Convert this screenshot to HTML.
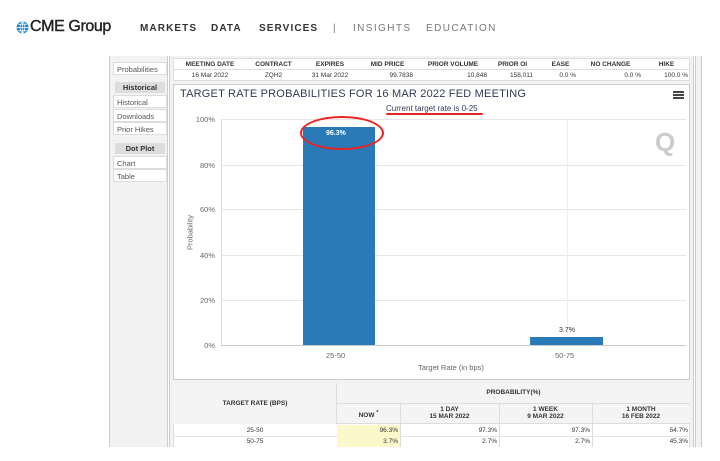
<!DOCTYPE html>
<html><head><style>
*{margin:0;padding:0;box-sizing:border-box}
body{width:720px;height:461px;background:#fff;font-family:"Liberation Sans",sans-serif;position:relative;overflow:hidden}
.a{position:absolute}
.nav{font-size:10px;letter-spacing:1.1px;color:#333;top:23px;font-weight:bold;white-space:nowrap}
.nl{font-weight:normal;color:#777;letter-spacing:1.4px}
.sb{background:#fff;border:1px solid #ddd;font-size:7.5px;color:#555;padding:2px 3px;left:113px;width:54px;height:13px}
.sh{background:#ddd;font-size:7.5px;font-weight:bold;color:#333;text-align:center;left:115px;width:50px;height:11px;padding-top:1px}
.th{font-size:6.5px;font-weight:bold;color:#333;text-align:center}
.td{font-size:6.5px;color:#333}
.yl{font-size:7.5px;color:#666;left:195px;width:20px;text-align:right}
.g{left:221px;width:465px;height:1px;background:#e6e6e6}
</style></head><body>
<svg class="a" style="left:16px;top:21px" width="13" height="13" viewBox="0 0 12 12"><circle cx="6" cy="6" r="5.5" fill="#1f8ac9"/><path d="M0.5 6h11M6 0.5v11M2 3h8M2 9h8M6 0.5c-3 3-3 8 0 11M6 0.5c3 3 3 8 0 11" stroke="#fff" stroke-width="0.6" fill="none"/></svg>
<div class="a" style="left:30px;top:18px;font-size:16px;color:#222;letter-spacing:-0.4px;-webkit-text-stroke:0.4px #222">CME Group</div>
<div class="a nav" style="left:140px">MARKETS</div>
<div class="a nav" style="left:211px">DATA</div>
<div class="a nav" style="left:259px">SERVICES</div>
<div class="a nav nl" style="left:333px">|</div>
<div class="a nav nl" style="left:353px">INSIGHTS</div>
<div class="a nav nl" style="left:426px">EDUCATION</div>

<div class="a" style="left:109px;top:56px;width:593px;height:392px;background:#f2f2f2;border-left:1px solid #ccc;border-right:1px solid #ccc"></div>
<div class="a" style="left:167px;top:56px;width:3px;height:392px;border-left:1px solid #ccc;border-right:1px solid #ccc;background:#fff"></div>
<div class="a" style="left:693px;top:56px;width:3px;height:392px;border-left:1px solid #ccc;border-right:1px solid #ccc;background:#fff"></div>
<div class="a sb" style="top:62px">Probabilities</div>
<div class="a sh" style="top:82px">Historical</div>
<div class="a sb" style="top:95px">Historical</div>
<div class="a sb" style="top:109px">Downloads</div>
<div class="a sb" style="top:122px">Prior Hikes</div>
<div class="a sh" style="top:143px">Dot Plot</div>
<div class="a sb" style="top:156px">Chart</div>
<div class="a sb" style="top:169px">Table</div>

<div class="a" style="left:173px;top:58px;width:517px;height:23px;background:#fff;border:1px solid #ddd"></div>
<div class="a" style="left:173px;top:69px;width:517px;height:1px;background:#ddd"></div>
<div class="a th" style="left:174px;top:61px;width:72px">MEETING DATE</div>
<div class="a th" style="left:246px;top:61px;width:55px">CONTRACT</div>
<div class="a th" style="left:301px;top:61px;width:58px">EXPIRES</div>
<div class="a th" style="left:359px;top:61px;width:57px">MID PRICE</div>
<div class="a th" style="left:416px;top:61px;width:74px">PRIOR VOLUME</div>
<div class="a th" style="left:490px;top:61px;width:45px">PRIOR OI</div>
<div class="a th" style="left:543px;top:61px;width:35px">EASE</div>
<div class="a th" style="left:578px;top:61px;width:65px">NO CHANGE</div>
<div class="a th" style="left:643px;top:61px;width:47px">HIKE</div>
<div class="a td" style="left:174px;top:72px;width:72px;text-align:center">16 Mar 2022</div>
<div class="a td" style="left:246px;top:72px;width:55px;text-align:center">ZQH2</div>
<div class="a td" style="left:301px;top:72px;width:58px;text-align:center">31 Mar 2022</div>
<div class="a td" style="left:359px;top:72px;width:54px;text-align:right">99.7838</div>
<div class="a td" style="left:416px;top:72px;width:71px;text-align:right">10,848</div>
<div class="a td" style="left:490px;top:72px;width:43px;text-align:right">158,011</div>
<div class="a td" style="left:543px;top:72px;width:33px;text-align:right">0.0 %</div>
<div class="a td" style="left:578px;top:72px;width:63px;text-align:right">0.0 %</div>
<div class="a td" style="left:643px;top:72px;width:45px;text-align:right">100.0 %</div>

<div class="a" style="left:173px;top:84px;width:517px;height:296px;background:#fff;border:1px solid #ccc"></div>
<div class="a" style="left:180px;top:88px;font-size:11px;color:#333a55;letter-spacing:0.2px">TARGET RATE PROBABILITIES FOR 16 MAR 2022 FED MEETING</div>
<div class="a" style="left:673px;top:91px;width:11px;height:2px;background:#444;box-shadow:0 3px #444,0 6px #444"></div>
<div class="a" style="left:386px;top:104px;font-size:8px;color:#333a55">Current target rate is 0-25</div>
<div class="a" style="left:386px;top:113px;width:97px;height:2px;background:#e22;border-radius:1px"></div>
<div class="a" style="left:655px;top:127px;font-size:26px;font-weight:bold;color:#ccc">Q</div>

<div class="a g" style="top:119px"></div><div class="a g" style="top:165px"></div><div class="a g" style="top:209px"></div><div class="a g" style="top:255px"></div><div class="a g" style="top:300px"></div>
<div class="a" style="left:567px;top:119px;width:1px;height:226px;background:#eee"></div>
<div class="a" style="left:221px;top:119px;width:1px;height:226px;background:#ddd"></div>
<div class="a" style="left:221px;top:345px;width:465px;height:1px;background:#ccc"></div>
<div class="a yl" style="top:115px">100%</div><div class="a yl" style="top:161px">80%</div><div class="a yl" style="top:205px">60%</div><div class="a yl" style="top:251px">40%</div><div class="a yl" style="top:296px">20%</div><div class="a yl" style="top:341px">0%</div>
<div class="a" style="left:170px;top:228px;font-size:7.5px;color:#666;transform:rotate(-90deg);width:40px;text-align:center">Probability</div>
<div class="a" style="left:303px;top:127px;width:72px;height:218px;background:#2a7ab8"></div>
<div class="a" style="left:530px;top:337px;width:73px;height:8px;background:#2a7ab8"></div>
<div class="a" style="left:326px;top:130px;font-size:7px;color:#fff;font-weight:bold">96.3%</div>
<div class="a" style="left:559px;top:327px;font-size:7px;color:#333">3.7%</div>
<div class="a" style="left:300px;top:116px;width:84px;height:34px;border:2px solid #e22;border-radius:50%"></div>
<div class="a" style="left:326px;top:351px;font-size:7.5px;color:#666">25-50</div>
<div class="a" style="left:555px;top:351px;font-size:7.5px;color:#666">50-75</div>
<div class="a" style="left:418px;top:363px;font-size:7.5px;color:#666">Target Rate (in bps)</div>

<div class="a" style="left:173px;top:383px;width:517px;height:65px;background:#fff;border:1px solid #ddd"></div>
<div class="a" style="left:173px;top:383px;width:164px;height:41px;background:#f4f4f4;border-right:1px solid #ddd"></div>
<div class="a" style="left:337px;top:383px;width:353px;height:41px;background:#f4f4f4;border-bottom:1px solid #ddd"></div>
<div class="a" style="left:337px;top:403px;width:353px;height:1px;background:#ddd"></div>
<div class="a" style="left:400px;top:403px;width:1px;height:45px;background:#ddd"></div>
<div class="a" style="left:499px;top:403px;width:1px;height:45px;background:#ddd"></div>
<div class="a" style="left:592px;top:403px;width:1px;height:45px;background:#ddd"></div>
<div class="a" style="left:173px;top:436px;width:517px;height:1px;background:#e5e5e5"></div>
<div class="a th" style="left:173px;top:400px;width:164px">TARGET RATE (BPS)</div>
<div class="a th" style="left:337px;top:389px;width:353px">PROBABILITY(%)</div>
<div class="a th" style="left:337px;top:410px;width:63px">NOW <sup>*</sup></div>
<div class="a th" style="left:400px;top:406px;width:99px">1 DAY<br>15 MAR 2022</div>
<div class="a th" style="left:499px;top:406px;width:93px">1 WEEK<br>9 MAR 2022</div>
<div class="a th" style="left:592px;top:406px;width:98px">1 MONTH<br>16 FEB 2022</div>
<div class="a" style="left:337px;top:425px;width:63px;height:23px;background:#fbf8cc"></div>
<div class="a td" style="left:173px;top:427px;width:164px;text-align:center">25-50</div>
<div class="a td" style="left:173px;top:438px;width:164px;text-align:center">50-75</div>
<div class="a td" style="left:337px;top:427px;width:61px;text-align:right">96.3%</div>
<div class="a td" style="left:337px;top:438px;width:61px;text-align:right">3.7%</div>
<div class="a td" style="left:400px;top:427px;width:97px;text-align:right">97.3%</div>
<div class="a td" style="left:400px;top:438px;width:97px;text-align:right">2.7%</div>
<div class="a td" style="left:499px;top:427px;width:91px;text-align:right">97.3%</div>
<div class="a td" style="left:499px;top:438px;width:91px;text-align:right">2.7%</div>
<div class="a td" style="left:592px;top:427px;width:96px;text-align:right">54.7%</div>
<div class="a td" style="left:592px;top:438px;width:96px;text-align:right">45.3%</div>
<div class="a" style="left:0;top:447px;width:720px;height:14px;background:#fff"></div>
</body></html>
